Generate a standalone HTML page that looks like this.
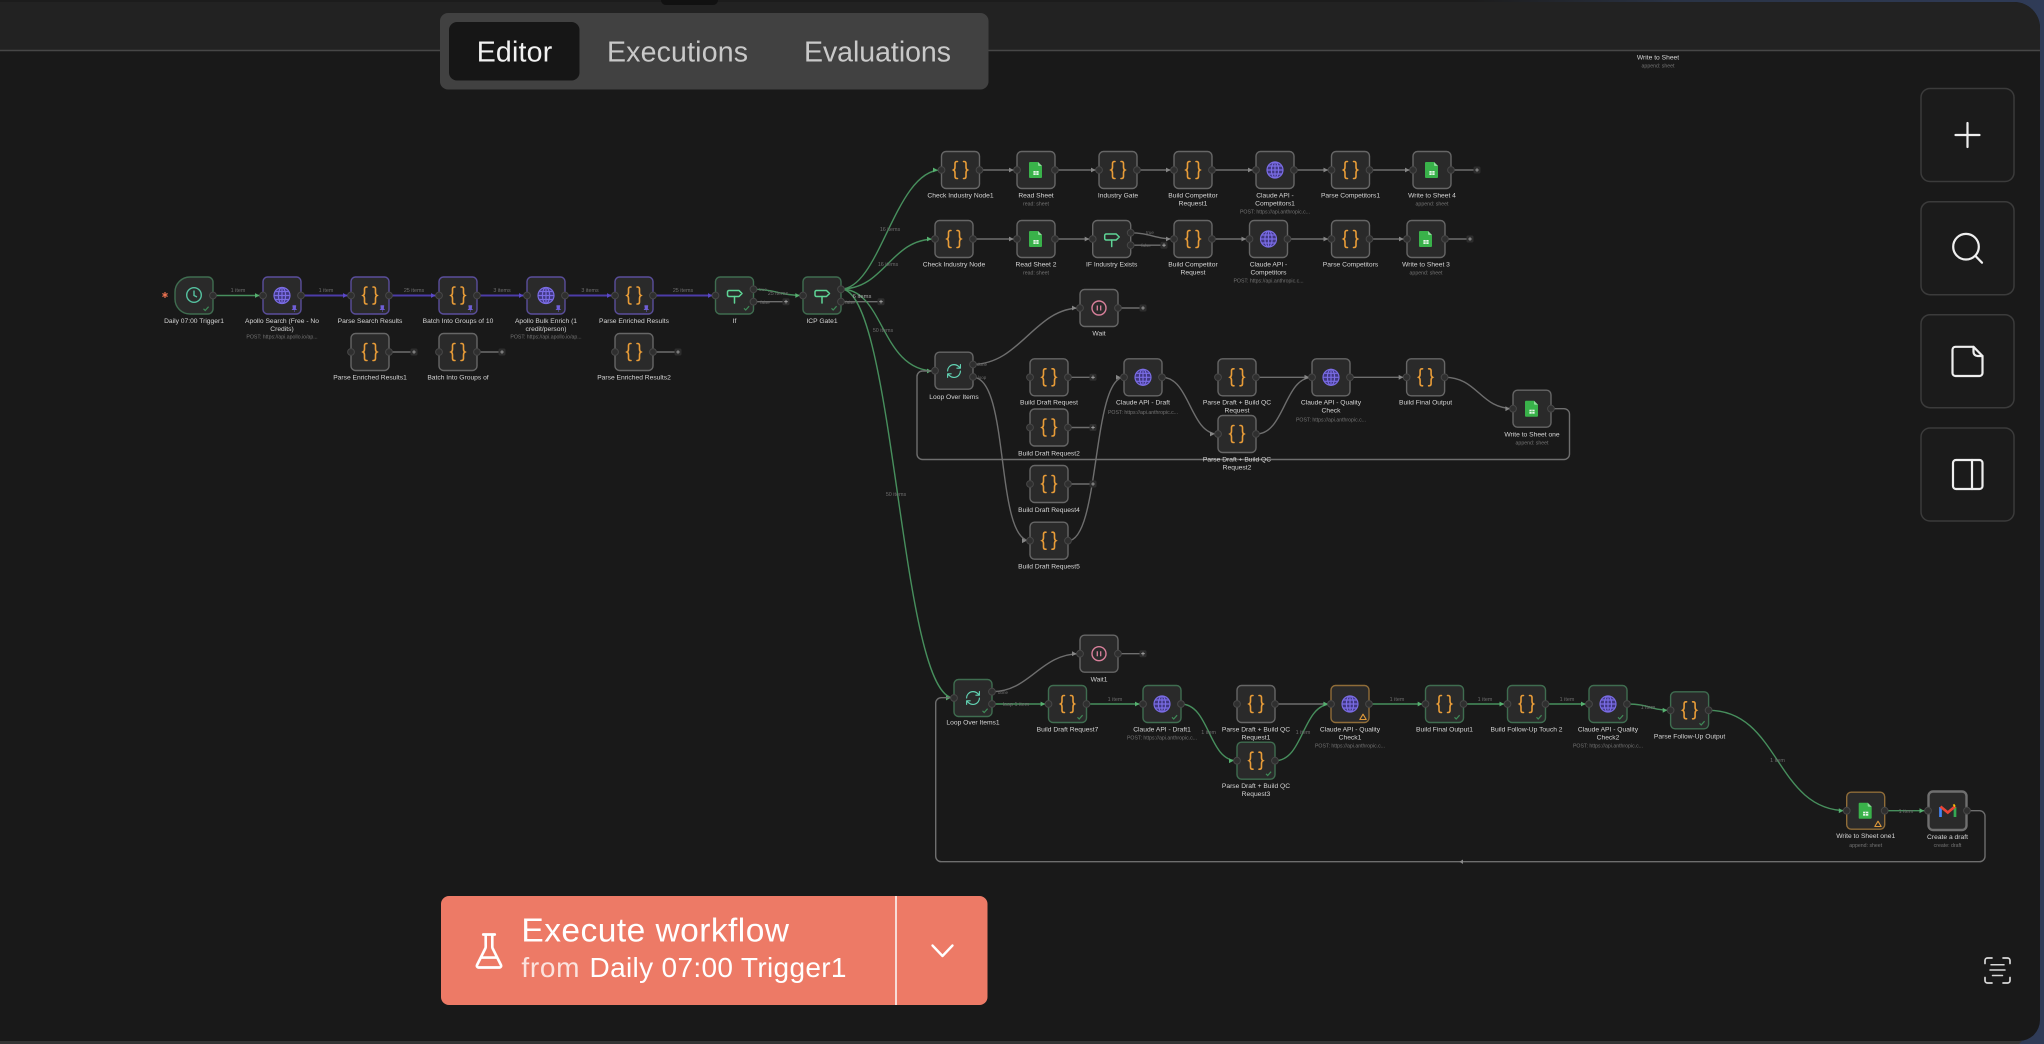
<!DOCTYPE html>
<html><head><meta charset="utf-8"><title>Workflow Editor</title>
<style>
html,body{margin:0;padding:0;background:#1a1a1a;width:2044px;height:1044px;overflow:hidden}
svg{display:block;font-family:"Liberation Sans",sans-serif}
.t{font-size:6.7px;fill:#d6d6d6;text-anchor:middle}
.s{font-size:5.2px;fill:#747474;text-anchor:middle}
.e{font-size:5.4px;fill:#6e6e6e;text-anchor:middle}
.a{fill:none;stroke:#6e6e6e;stroke-width:1.4}
.b{fill:none;stroke:#478f5d;stroke-width:1.4}
.c{fill:none;stroke:#4c3ca8;stroke-width:1.9}
.g{color:#3f6d50}.p{color:#5a4e9c}.w{color:#666}.o{color:#8f6c38}
#blurred{filter:blur(.35px)}
</style></head><body>
<svg width="2044" height="1044" viewBox="0 0 2044 1044" xmlns="http://www.w3.org/2000/svg">
<defs>
<linearGradient id="bgG" x1="0" x2="1" y1="0" y2="0"><stop offset=".72" stop-color="#1c1c1c"/><stop offset=".82" stop-color="#2a3345"/><stop offset="1" stop-color="#2f3b57"/></linearGradient>
<marker id="ma" markerUnits="userSpaceOnUse" viewBox="-1 -4 10 8" markerWidth="10" markerHeight="8" refX="8" refY="0" orient="auto"><path d="M0-2.4 4.6 0 0 2.4z" fill="#858585"/></marker>
<marker id="mb" markerUnits="userSpaceOnUse" viewBox="-1 -4 10 8" markerWidth="10" markerHeight="8" refX="8" refY="0" orient="auto"><path d="M0-2.4 4.6 0 0 2.4z" fill="#55b06f"/></marker>
<marker id="mc" markerUnits="userSpaceOnUse" viewBox="-1 -4 10 8" markerWidth="10" markerHeight="8" refX="8" refY="0" orient="auto"><path d="M0-2.4 4.6 0 0 2.4z" fill="#5a48c8"/></marker>
<g id="pl"><circle r="3.4" fill="#2f2f2f" stroke="#474747" stroke-width="1"/></g>
<g id="B"><rect x="-19" y="-18.5" width="38" height="37" rx="4.5" fill="#2a2a2a" stroke="currentColor" stroke-width="1.4"/><use href="#pl" x="-19"/></g>
<g id="N"><use href="#B"/><use href="#pl" x="19"/></g>
<g id="N2"><use href="#B"/><use href="#pl" x="19" y="-6.2"/><use href="#pl" x="19" y="6.2"/></g>
<g id="iC" fill="none" stroke="#e89c38" stroke-width="1.6" stroke-linecap="round"><path d="M-3-8.5h-.5c-1.400 0-2 .8-2 2v3.600c0 1.500-.5 2.400-1.500 2.900 1 .5 1.500 1.400 1.500 2.900v3.600c0 1.200.6 2 2 2h.5"/><path d="M3-8.500h.5c1.400 0 2 .8 2 2v3.600c0 1.500.5 2.400 1.500 2.900-1 .5-1.500 1.400-1.500 2.900v3.600c0 1.200-.6 2-2 2h-.5"/></g>
<g id="iG" fill="none" stroke="#7a6ce4" stroke-width="1.2"><circle r="8" fill="#3f3680"/><ellipse rx="3.6" ry="8"/><path d="M0-8V8M-8 0H8M-7-4H7M-7 4H7"/></g>
<g id="iS"><path d="M-6-8h8l4 4v11a1 1 0 0 1-1 1H-6a1 1 0 0 1-1-1V-7a1 1 0 0 1 1-1z" fill="#39b24a"/><path d="M2-8l4 4H3a1 1 0 0 1-1-1z" fill="#8fdc9a"/><rect x="-2.6" y="1" width="5.2" height="4" fill="#e8f7ea"/><path d="M0 1v4M-2.600 3h5.200" stroke="#39b24a" stroke-width=".6"/></g>
<g id="iI" fill="none" stroke="#5ed596" stroke-width="1.500" stroke-linejoin="round" stroke-linecap="round"><path d="M-5.500-5.500h10l3 3-3 3h-10a1.500 1.500 0 0 1-1.500-1.500v-3a1.500 1.500 0 0 1 1.500-1.500z"/><path d="M0 .5V7"/></g>
<g id="iL" fill="none" stroke="#62d4b4" stroke-width="1.600" stroke-linecap="round" stroke-linejoin="round" transform="translate(-8.500,-8.500) scale(.71)"><path d="M3 12a9 9 0 0 1 9-9 9.750 9.750 0 0 1 6.740 2.740L21 8M21 3v5h-5M21 12a9 9 0 0 1-9 9 9.750 9.750 0 0 1-6.740-2.740L3 16M8 16H3v5"/></g>
<g id="iW" fill="none" stroke="#d9809b" stroke-width="1.400"><circle r="7"/><path d="M-1.700-2.500V2.500M1.700-2.500V2.500" stroke-width="1.300"/></g>
<g id="C"><use href="#N"/><use href="#iC"/></g>
<g id="G"><use href="#N"/><use href="#iG"/></g>
<g id="S"><use href="#N"/><use href="#iS"/></g>
<path id="k" d="M-2.500.3-.8 2 2.600-1.800" fill="none" stroke="#3f8a58" stroke-width="1.200"/>
<path id="pn" d="M-1.700-2.500h3.400l-.5 3 1.200 1.200h-4.800l1.200-1.200zM0 1.700V4" fill="#6f5fd8" stroke="#6f5fd8" stroke-width=".5"/>
<g id="wa"><path d="M0-2.800 3.200 2.500H-3.200Z" fill="none" stroke="#e09a3a" stroke-width="1.100" stroke-linejoin="round"/></g>
<g id="P"><rect x="-3.500" y="-3.500" width="7" height="7" rx="1.500" fill="#2d2d2d"/><path d="M-1.800 0H1.800M0-1.800V1.800" stroke="#aaa" stroke-width=".8"/></g>
</defs>

<rect width="2044" height="1044" fill="url(#bgG)"/>
<path d="M0 2H2014a26 26 0 0 1 26 26V1020a21 21 0 0 1-21 21H0Z" fill="#191919"/>
<path d="M0 2H2014a26 26 0 0 1 26 26V50.500H0Z" fill="#222"/>
<path d="M0 50.500H2040" stroke="#474747" stroke-width="1.500"/>
<path d="M0 1041H2022l-3 3H0Z" fill="#343434"/>
<path d="M661 0H718V1a5 5 0 0 1-5 4H666a5 5 0 0 1-5-4Z" fill="#111"/>

<g id="blurred">
<!-- edges -->
<g>
<path class="b" d="M213 295.500H263" stroke-width="1.800" marker-end="url(#mb)"/>
<path class="c" d="M300.700 295.500H351" marker-end="url(#mc)"/>
<path class="c" d="M388.700 295.500H439" marker-end="url(#mc)"/>
<path class="c" d="M476.700 295.500H527" marker-end="url(#mc)"/>
<path class="c" d="M564.700 295.500H615" marker-end="url(#mc)"/>
<path class="c" d="M652.700 295.500H716" marker-end="url(#mc)"/>
<path class="b" d="M753.300 289.300C775 289.300 780 295.500 803.300 295.500" marker-end="url(#mb)"/>
<path class="a" d="M753.300 301.700H786"/>
<path class="a" d="M841 301.700H881"/>
<path class="b" d="M841 289C880 289 895 170 941 170" marker-end="url(#mb)"/>
<path class="b" d="M841 289C885 289 890 239 935 239" marker-end="url(#mb)"/>
<path class="b" d="M841 289C885 289 880 371 935 371" marker-end="url(#mb)"/>
<path class="b" d="M841 289C895 289 900 698 954 698" marker-end="url(#mb)"/>
<path class="a" d="M388.700 352H414M476.700 352H502M652.700 352H678"/>
<path class="a" d="M979.500 170H1017" marker-end="url(#ma)"/>
<path class="a" d="M1055 170H1099" marker-end="url(#ma)"/>
<path class="a" d="M1137 170H1174" marker-end="url(#ma)"/>
<path class="a" d="M1212 170H1256" marker-end="url(#ma)"/>
<path class="a" d="M1294 170H1331.500" marker-end="url(#ma)"/>
<path class="a" d="M1369.500 170H1413" marker-end="url(#ma)"/>
<path class="a" d="M1451 170H1477"/>
<path class="a" d="M973 239H1017" marker-end="url(#ma)"/>
<path class="a" d="M1055 239H1092.700" marker-end="url(#ma)"/>
<path class="a" d="M1130.700 232.800C1150 232.800 1155 239 1174 239" marker-end="url(#ma)"/>
<path class="a" d="M1130.700 245.200H1164"/>
<path class="a" d="M1212 239H1249.500" marker-end="url(#ma)"/>
<path class="a" d="M1287.500 239H1331.500" marker-end="url(#ma)"/>
<path class="a" d="M1369.500 239H1407" marker-end="url(#ma)"/>
<path class="a" d="M1445 239H1470"/>
<path class="a" d="M1118 308H1143"/>
<path class="a" d="M973 364.300C1020 364.300 1035 308 1080 308" marker-end="url(#ma)"/>
<path class="a" d="M973 377.300C1010 377.300 995 540.700 1030 540.700" marker-end="url(#ma)"/>
<path class="a" d="M1068 377.300H1093M1068 427.500H1093M1068 484H1093"/>
<path class="a" d="M1068 540.700C1100 540.700 1092 377.300 1124 377.300" marker-end="url(#ma)"/>
<path class="a" d="M1162 377.300C1190 377.300 1190 434 1218 434" marker-end="url(#ma)"/>
<path class="a" d="M1256 377.300H1312.500" marker-end="url(#ma)"/>
<path class="a" d="M1256 434C1285 434 1284 377.300 1312.500 377.300" marker-end="url(#ma)"/>
<path class="a" d="M1350.500 377.300H1406.700" marker-end="url(#ma)"/>
<path class="a" d="M1444.600 377.300C1478 377.300 1480 408.700 1513.400 408.700" marker-end="url(#ma)"/>
<path class="a" d="M1551 408.700H1564a5.500 5.500 0 0 1 5.500 5.500V454a5.500 5.500 0 0 1-5.500 5.500H922.500a5.500 5.500 0 0 1-5.500-5.500V376.500a5.500 5.500 0 0 1 5.500-5.500H935"/>
<path class="a" d="M1118 653.700H1143"/>
<path class="a" d="M992 691.700C1030 691.700 1040 653.700 1080 653.700" marker-end="url(#ma)"/>
<path class="b" d="M992 704H1048.600" stroke-width="1.600" marker-end="url(#mb)"/>
<path class="b" d="M1086.400 704H1143" stroke-width="1.600" marker-end="url(#mb)"/>
<path class="b" d="M1180.700 704C1210 704 1208 760.700 1237 760.700" marker-end="url(#mb)"/>
<path class="a" d="M1275 704H1331.400"/>
<path class="b" d="M1275 760.700C1304 760.700 1302 704 1331.400 704" marker-end="url(#mb)"/>
<path class="b" d="M1369 704H1425.700" stroke-width="1.600" marker-end="url(#mb)"/>
<path class="b" d="M1463.500 704H1507.500" stroke-width="1.600" marker-end="url(#mb)"/>
<path class="b" d="M1545.500 704H1589" stroke-width="1.600" marker-end="url(#mb)"/>
<path class="b" d="M1627 704C1650 704 1650 710.300 1670.700 710.300" marker-end="url(#mb)"/>
<path class="b" d="M1708.600 710.300C1780 710.300 1775 810.700 1846.800 810.700" marker-end="url(#mb)"/>
<path class="b" d="M1884.600 810.700H1927.500" marker-end="url(#mb)"/>
<path class="a" d="M1967.500 810.700H1979.500a5.500 5.500 0 0 1 5.500 5.500V856.200a5.500 5.500 0 0 1-5.500 5.500H941.200a5.500 5.500 0 0 1-5.500-5.500V703.200a5.500 5.500 0 0 1 5.500-5.500H954"/>
<path d="M1463 859.500 1459.500 861.700 1463 864Z" fill="#8a8a8a"/>
</g>
<!-- edge labels -->
<g>
<text class="e" x="238" y="292">1 item</text><text class="e" x="326" y="292">1 item</text><text class="e" x="414" y="292">25 items</text><text class="e" x="502" y="292">3 items</text><text class="e" x="590" y="292">3 items</text><text class="e" x="683" y="292">25 items</text>
<text class="e" x="778" y="295">25 items</text><text class="e" x="763" y="291" style="font-size:4.500px">true</text><text class="e" x="765" y="304" style="font-size:4.500px">false</text>
<text class="t" x="862" y="298" style="font-size:5.800px;fill:#aaa">6 items</text><text class="e" x="850" y="304" style="font-size:4.500px">false</text>
<text class="e" x="890" y="231">16 items</text><text class="e" x="888" y="266">16 items</text><text class="e" x="883" y="332">50 items</text><text class="e" x="896" y="496">50 items</text>
<text class="e" x="1150" y="234" style="font-size:4.500px">true</text><text class="e" x="1146" y="247" style="font-size:4.500px">false</text>
<text class="e" x="982" y="366" style="font-size:4.500px">done</text><text class="e" x="982" y="379" style="font-size:4.500px">loop</text>
<text class="e" x="1003" y="694" style="font-size:4.500px">done</text><text class="e" x="1016" y="706">loop 1 item</text>
<text class="e" x="1115" y="701">1 item</text><text class="e" x="1208.600" y="734">1 item</text><text class="e" x="1303" y="734">1 item</text><text class="e" x="1397" y="701">1 item</text><text class="e" x="1485" y="701">1 item</text><text class="e" x="1567" y="701">1 item</text><text class="e" x="1648" y="709">1 item</text><text class="e" x="1777.500" y="762">1 item</text><text class="e" x="1906" y="813">1 item</text>
</g>
<!-- trigger row -->
<path d="M165 292V298M162.400 293.500 167.600 296.500M167.600 293.500 162.400 296.500" stroke="#e8704f" stroke-width="1.200"/>
<path class="g" d="M190 277H208a5 5 0 0 1 5 5V309a5 5 0 0 1-5 5H190a15 15 0 0 1-15-15V292a15 15 0 0 1 15-15Z" fill="#2a2a2a" stroke="currentColor" stroke-width="1.400"/>
<use href="#pl" x="213" y="295.500"/>
<g fill="none" stroke="#55c2a0" stroke-width="1.400"><circle cx="194" cy="295" r="7.300"/><path d="M194 290.500V295.500L197 297"/></g>
<use href="#k" x="206" y="308.500"/>
<use href="#G" x="282" y="295.500" class="p"/><use href="#C" x="370" y="295.500" class="p"/><use href="#C" x="458" y="295.500" class="p"/><use href="#G" x="546" y="295.500" class="p"/><use href="#C" x="634" y="295.500" class="p"/>
<use href="#pn" x="294.300" y="308"/><use href="#pn" x="382.300" y="308"/><use href="#pn" x="470.300" y="308"/><use href="#pn" x="558.300" y="308"/><use href="#pn" x="646.300" y="308"/>
<use href="#C" x="370" y="352" class="w"/><use href="#C" x="458" y="352" class="w"/><use href="#C" x="634" y="352" class="w"/>
<use href="#P" x="414" y="352"/><use href="#P" x="502" y="352"/><use href="#P" x="678" y="352"/>
<use href="#N2" x="734.500" y="295.500" class="g"/><use href="#iI" x="734.500" y="296"/><use href="#k" x="746.500" y="308"/><use href="#P" x="786" y="301.700"/>
<use href="#N2" x="822" y="295.500" class="g"/><use href="#iI" x="822" y="296"/><use href="#k" x="834" y="308"/><use href="#P" x="881" y="301.700"/>
<text class="t" x="194" y="323">Daily 07:00 Trigger1</text>
<text class="t" x="282" y="323">Apollo Search (Free - No</text><text class="t" x="282" y="331">Credits)</text><text class="s" x="282" y="338.600">POST: https://api.apollo.io/ap...</text>
<text class="t" x="370" y="323">Parse Search Results</text><text class="t" x="458" y="323">Batch Into Groups of 10</text>
<text class="t" x="546" y="323">Apollo Bulk Enrich (1</text><text class="t" x="546" y="331">credit/person)</text><text class="s" x="546" y="338.600">POST: https://api.apollo.io/ap...</text>
<text class="t" x="634" y="323">Parse Enriched Results</text><text class="t" x="734.500" y="323">If</text><text class="t" x="822" y="323">ICP Gate1</text>
<text class="t" x="370" y="379.500">Parse Enriched Results1</text><text class="t" x="458" y="379.500">Batch Into Groups of</text><text class="t" x="634" y="379.500">Parse Enriched Results2</text>
<!-- row 1 -->
<use href="#C" x="960.500" y="170" class="w"/><use href="#S" x="1036" y="170" class="w"/><use href="#C" x="1118" y="170" class="w"/><use href="#C" x="1193" y="170" class="w"/><use href="#G" x="1275" y="170" class="w"/><use href="#C" x="1350.500" y="170" class="w"/><use href="#S" x="1432" y="170" class="w"/><use href="#P" x="1477" y="170"/>
<text class="t" x="960.500" y="197.500">Check Industry Node1</text><text class="t" x="1036" y="197.500">Read Sheet</text><text class="s" x="1036" y="205.500">read: sheet</text><text class="t" x="1118" y="197.500">Industry Gate</text>
<text class="t" x="1193" y="197.500">Build Competitor</text><text class="t" x="1193" y="205.500">Request1</text>
<text class="t" x="1275" y="197.500">Claude API -</text><text class="t" x="1275" y="205.500">Competitors1</text><text class="s" x="1275" y="213.500">POST: https://api.anthropic.c...</text>
<text class="t" x="1350.500" y="197.500">Parse Competitors1</text><text class="t" x="1432" y="197.500">Write to Sheet 4</text><text class="s" x="1432" y="205.500">append: sheet</text>
<!-- row 2 -->
<use href="#C" x="954" y="239" class="w"/><use href="#S" x="1036" y="239" class="w"/><use href="#N2" x="1111.700" y="239" class="w"/><use href="#iI" x="1111.700" y="239.500"/><use href="#P" x="1164" y="245.200"/><use href="#C" x="1193" y="239" class="w"/><use href="#G" x="1268.500" y="239" class="w"/><use href="#C" x="1350.500" y="239" class="w"/><use href="#S" x="1426" y="239" class="w"/><use href="#P" x="1470" y="239"/>
<text class="t" x="954" y="266.500">Check Industry Node</text><text class="t" x="1036" y="266.500">Read Sheet 2</text><text class="s" x="1036" y="274.500">read: sheet</text><text class="t" x="1111.700" y="266.500">IF Industry Exists</text>
<text class="t" x="1193" y="266.500">Build Competitor</text><text class="t" x="1193" y="274.500">Request</text>
<text class="t" x="1268.500" y="266.500">Claude API -</text><text class="t" x="1268.500" y="274.500">Competitors</text><text class="s" x="1268.500" y="282.500">POST: https://api.anthropic.c...</text>
<text class="t" x="1350.500" y="266.500">Parse Competitors</text><text class="t" x="1426" y="266.500">Write to Sheet 3</text><text class="s" x="1426" y="274.500">append: sheet</text>
<!-- draft section -->
<use href="#N" x="1099" y="308" class="w"/><use href="#iW" x="1099" y="308"/><use href="#P" x="1143" y="308"/>
<use href="#N2" x="954" y="370.700" class="w"/><use href="#iL" x="954" y="371"/>
<use href="#C" x="1049" y="377.300" class="w"/><use href="#P" x="1093" y="377.300"/>
<use href="#C" x="1049" y="427.500" class="w"/><use href="#P" x="1093" y="427.500"/>
<use href="#C" x="1049" y="484" class="w"/><use href="#P" x="1093" y="484"/>
<use href="#C" x="1049" y="540.700" class="w"/>
<use href="#G" x="1143" y="377.300" class="w"/><use href="#C" x="1237" y="377.300" class="w"/><use href="#C" x="1237" y="434" class="w"/><use href="#G" x="1331" y="377.300" class="w"/><use href="#C" x="1425.600" y="377.300" class="w"/><use href="#S" x="1532" y="408.700" class="w"/>
<text class="t" x="1099" y="335.500">Wait</text><text class="t" x="954" y="399">Loop Over Items</text>
<text class="t" x="1049" y="404.600">Build Draft Request</text><text class="t" x="1049" y="455.300">Build Draft Request2</text><text class="t" x="1049" y="512">Build Draft Request4</text><text class="t" x="1049" y="568.300">Build Draft Request5</text>
<text class="t" x="1143" y="404.600">Claude API - Draft</text><text class="s" x="1143" y="414">POST: https://api.anthropic.c...</text>
<text class="t" x="1237" y="404.600">Parse Draft + Build QC</text><text class="t" x="1237" y="412.500">Request</text>
<text class="t" x="1237" y="461.300">Parse Draft + Build QC</text><text class="t" x="1237" y="469.300">Request2</text>
<text class="t" x="1331" y="404.600">Claude API - Quality</text><text class="t" x="1331" y="412.500">Check</text><text class="s" x="1331" y="421.500">POST: https://api.anthropic.c...</text>
<text class="t" x="1425.600" y="404.600">Build Final Output</text><text class="t" x="1532" y="436.300">Write to Sheet one</text><text class="s" x="1532" y="444.500">append: sheet</text>
<!-- bottom section -->
<use href="#N" x="1099" y="653.700" class="w"/><use href="#iW" x="1099" y="653.700"/><use href="#P" x="1143" y="653.700"/>
<use href="#B" x="973" y="698" class="g"/><use href="#pl" x="992" y="691.700"/><use href="#pl" x="992" y="704"/><use href="#iL" x="973" y="698"/><use href="#k" x="985" y="710.500"/>
<use href="#C" x="1067.500" y="704" class="g"/><use href="#k" x="1080" y="717"/>
<use href="#G" x="1162" y="704" class="g"/><use href="#k" x="1174.500" y="717"/>
<use href="#C" x="1256" y="704" class="w"/>
<use href="#C" x="1256" y="760.700" class="g"/><use href="#k" x="1268.500" y="773.500"/>
<use href="#G" x="1350" y="704" class="o"/><use href="#wa" x="1363" y="717"/>
<use href="#C" x="1444.500" y="704" class="g"/><use href="#k" x="1457" y="717"/>
<use href="#C" x="1526.500" y="704" class="g"/><use href="#k" x="1539" y="717"/>
<use href="#G" x="1608" y="704" class="g"/><use href="#k" x="1620.500" y="717"/>
<use href="#C" x="1689.600" y="710.300" class="g"/><use href="#k" x="1702" y="723"/>
<use href="#S" x="1865.700" y="810.700" class="o"/><use href="#wa" x="1878" y="824"/>
<rect x="1928.500" y="791.500" width="38" height="38.500" rx="4.500" fill="#2a2a2a" stroke="#6f6f6f" stroke-width="2.400"/><use href="#pl" x="1928" y="810.700"/><use href="#pl" x="1967" y="810.700"/>
<g fill="none" stroke-width="2.700"><path d="M1940.500 807V817" stroke="#4285f4"/><path d="M1955 807V817" stroke="#34a853"/><path d="M1940.500 806.500 1947.800 812.500 1955 806.500" stroke="#ea4335"/><path d="M1953.500 806 1955 805" stroke="#fbbc04"/></g>
<text class="t" x="973" y="724.600">Loop Over Items1</text><text class="t" x="1099" y="681.500">Wait1</text>
<text class="t" x="1067.500" y="731.600">Build Draft Request7</text><text class="t" x="1162" y="731.600">Claude API - Draft1</text><text class="s" x="1162" y="739.500">POST: https://api.anthropic.c...</text>
<text class="t" x="1256" y="731.600">Parse Draft + Build QC</text><text class="t" x="1256" y="739.300">Request1</text>
<text class="t" x="1256" y="788">Parse Draft + Build QC</text><text class="t" x="1256" y="796">Request3</text>
<text class="t" x="1350" y="731.600">Claude API - Quality</text><text class="t" x="1350" y="739.300">Check1</text><text class="s" x="1350" y="747.500">POST: https://api.anthropic.c...</text>
<text class="t" x="1444.500" y="731.600">Build Final Output1</text><text class="t" x="1526.500" y="731.600">Build Follow-Up Touch 2</text>
<text class="t" x="1608" y="731.600">Claude API - Quality</text><text class="t" x="1608" y="739.300">Check2</text><text class="s" x="1608" y="747.500">POST: https://api.anthropic.c...</text>
<text class="t" x="1689.600" y="738.300">Parse Follow-Up Output</text>
<text class="t" x="1865.700" y="838">Write to Sheet one1</text><text class="s" x="1865.700" y="847">append: sheet</text>
<text class="t" x="1947.500" y="839">Create a draft</text><text class="s" x="1947.500" y="847">create: draft</text>
<text class="t" x="1658" y="59.300">Write to Sheet</text><text class="s" x="1658" y="67.500">append: sheet</text>
</g>

<!-- tabs -->
<rect x="440" y="13" width="548.500" height="76.500" rx="8" fill="#414141"/>
<rect x="449" y="22" width="130.500" height="58.500" rx="8" fill="#161616"/>
<text x="476.700" y="61.500" font-size="28.500" fill="#f2f2f2" textLength="75.500">Editor</text>
<text x="607" y="61.500" font-size="28.500" fill="#c9c9c9" textLength="141">Executions</text>
<text x="804" y="61.500" font-size="28.500" fill="#c9c9c9" textLength="147">Evaluations</text>

<!-- right buttons -->
<g fill="#1b1b1b" stroke="#3b3b3b" stroke-width="1.500">
<rect x="1921" y="88.500" width="93" height="93" rx="9"/><rect x="1921" y="201.700" width="93" height="93" rx="9"/><rect x="1921" y="314.700" width="93" height="93" rx="9"/><rect x="1921" y="428" width="93" height="93" rx="9"/>
</g>
<g fill="none" stroke="#efefef" stroke-width="2.200" stroke-linecap="round" stroke-linejoin="round">
<path d="M1955.500 135H1979.500M1967.500 123V147"/>
<circle cx="1966" cy="246.700" r="12.800"/><path d="M1975.500 256 1982 262.700"/>
<path d="M1955.500 346.800H1973.500L1982.500 356V373a3 3 0 0 1-3 3H1955.500a3 3 0 0 1-3-3V349.800a3 3 0 0 1 3-3Z"/><path d="M1973.500 346.800V352a4 4 0 0 0 4 4H1982.500"/>
<rect x="1953" y="460" width="29.500" height="29" rx="3"/><path d="M1972 460V489"/>
<path d="M1985 963.500V960.500a2.500 2.500 0 0 1 2.500-2.500H1992M2003 958H2007.500a2.500 2.500 0 0 1 2.500 2.500V963.500M2010 977.500V980.500a2.500 2.500 0 0 1-2.500 2.500H2003M1992 983H1987.500a2.500 2.500 0 0 1-2.500-2.500V977.500" stroke="#d8d8d8" stroke-width="1.700"/>
<path d="M1991 964.700H2004M1990 970H2005M1992.500 975.500H2002.500" stroke="#d8d8d8" stroke-width="1.500"/>
</g>

<!-- execute button -->
<rect x="441" y="896" width="546.500" height="109" rx="8" fill="#ed7a66"/>
<rect x="895" y="896" width="2" height="109" fill="#f7ddd8"/>
<g transform="translate(469.200,931.200) scale(1.650)" fill="none" stroke="#fff" stroke-width="1.600" stroke-linecap="round" stroke-linejoin="round"><path d="M10 2v7.527a2 2 0 0 1-.211.896L4.720 20.550a1 1 0 0 0 .9 1.450h12.760a1 1 0 0 0 .9-1.450l-5.069-10.127A2 2 0 0 1 14 9.527V2M8.500 2h7M7 16h10"/></g>
<text x="521.400" y="941.700" font-size="33.500" fill="#fff" textLength="267.600">Execute workflow</text>
<text x="521.400" y="977" font-size="28" fill="#fbe3de" textLength="58">from</text>
<text x="589.500" y="977" font-size="28" fill="#fff" textLength="257">Daily 07:00 Trigger1</text>
<path d="M932.500 945.500 942.500 956 952.500 945.500" fill="none" stroke="#fff" stroke-width="2.400" stroke-linecap="round" stroke-linejoin="round"/>
</svg>
</body></html>
